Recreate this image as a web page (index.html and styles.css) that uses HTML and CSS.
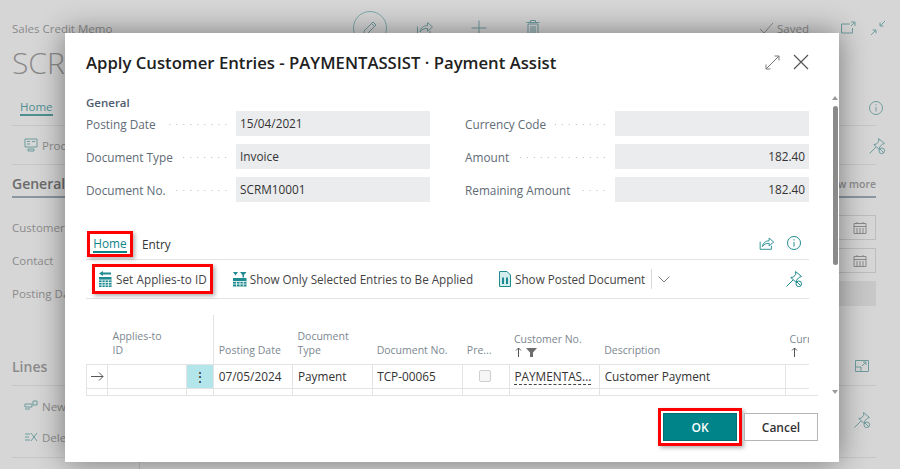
FILE: index.html
```html
<!DOCTYPE html>
<html lang="en">
<head>
    <meta charset="UTF-8">
    <title>Apply Customer Entries</title>
    <link rel="stylesheet" href="styles.css">
</head>
<body>
    <svg class="defs" width="0" height="0">
        <symbol id="pin" viewBox="0 0 20 20"><path d="M11.500 2.500 17.500 7.500l-2.300.8-2.700 2.900-.2 2.300L6.800 8.500l2.500-.4 2.500-2.800zM9 11 2.500 17.500" fill="none" stroke="currentColor"/><circle cx="14.800" cy="14.800" r="2.800" fill="none" stroke="currentColor"/><path d="m12.800 12.800 4 4" stroke="currentColor"/></symbol>
        <symbol id="info" viewBox="0 0 20 20"><circle cx="10" cy="10" r="6.500" fill="none" stroke="currentColor"/><path d="M10 9v4.500M10 6.200v1.300" stroke="currentColor"/></symbol>
        <symbol id="share" viewBox="0 0 20 20"><path d="M3.500 8.500v8.500h12.500v-4M6 14c.5-4 3.500-6.500 7.500-6.500V4.500l5 4.500-5 4.200V10.300C10 10.300 7.500 11.500 6 14z" fill="none" stroke="currentColor"/></symbol>
        <symbol id="up" viewBox="0 0 7 10"><path d="M3.500 10V1M1 3.500 3.500 1 6 3.500" fill="none" stroke="#555"/></symbol>
    </svg>

    <!-- pagina de fondo -->
    <div class="page">
        <div class="topbar">
            <span class="caption">Sales Credit Memo</span>
            <div class="top-icons">
                <span class="edit-circle">
                    <svg width="18" height="18" viewBox="0 0 18 18"><path d="M2.500 15.500l1-4 8.500-8.500 3 3-8.500 8.500zM10.500 4.500l3 3" fill="none" stroke="currentColor"/></svg>
                </span>
                <svg class="top-share" width="20" height="20"><use href="#share"/></svg>
                <svg class="top-plus" width="18" height="18" viewBox="0 0 18 18"><path d="M9 1.500v15M1.500 9h15" stroke="currentColor"/></svg>
                <svg class="top-trash" width="16" height="18" viewBox="0 0 16 18"><path d="M3 5h10v12H3zM1.500 3.500h13M5.500 3.500V1.500h5v2M6 7v8M8 7v8M10 7v8" fill="none" stroke="currentColor"/></svg>
            </div>
            <div class="top-right">
                <svg width="15" height="12" viewBox="0 0 15 12"><path d="M1 7l4 4 9-10" fill="none" stroke="#8d8d8d"/></svg>
                <span class="saved">Saved</span>
                <svg class="open-icon" width="16" height="14" viewBox="0 0 16 14"><path d="M10 3H1.500v9h11V7M11 1h4v4M15 1l-4 4" fill="none" stroke="currentColor"/></svg>
                <svg class="shrink-icon" width="16" height="16" viewBox="0 0 16 16"><path d="M15 1l-5 5M10 2.500V6h3.500M1 15l5-5M2.500 10H6v3.500" fill="none" stroke="currentColor"/></svg>
            </div>
        </div>
        <div class="doc-title">SCRM</div>
        <div class="bg-tabs">
            <span class="bg-home">Home</span>
            <svg class="bg-icon" width="20" height="20"><use href="#info"/></svg>
        </div>
        <div class="bg-actions">
            <span class="bg-action">
                <svg width="14" height="14" viewBox="0 0 14 14"><path d="M1 1h12v8H1zM3 3.500h3M3 6h3M8 3.500h3M4 11h6v2H4z" fill="none" stroke="currentColor"/></svg>
                Process
            </span>
            <svg class="bg-icon bg-pin" width="20" height="20"><use href="#pin"/></svg>
        </div>
        <div class="bg-section">
            <span class="bg-section-name">General</span>
            <span class="bg-more">Show more</span>
        </div>
        <div class="bg-field">
            <span>Customer Name</span>
            <span class="bg-date"><svg width="14" height="14" viewBox="0 0 14 14"><path d="M1 2.500h12v10H1zM1 5.500h12M4 1v2M10 1v2M4 7v5M7 7v5M10 7v5" fill="none" stroke="#8a8a8a"/></svg></span>
        </div>
        <div class="bg-field">
            <span>Contact</span>
            <span class="bg-date"><svg width="14" height="14" viewBox="0 0 14 14"><path d="M1 2.500h12v10H1zM1 5.500h12M4 1v2M10 1v2M4 7v5M7 7v5M10 7v5" fill="none" stroke="#8a8a8a"/></svg></span>
        </div>
        <div class="bg-field">
            <span>Posting Date</span>
            <span class="bg-date bg-blank"></span>
        </div>
        <div class="bg-lines-head">
            <span class="bg-lines-name">Lines</span>
            <svg class="bg-lines-icon" width="16" height="16" viewBox="0 0 16 16"><path d="M1.500 2.500h13v11h-13zM7 13.500V9H1.500M8 8l4-4M9 4h3v3" fill="none" stroke="currentColor"/></svg>
        </div>
        <div class="bg-lines-body">
            <div class="bg-lines-list">
                <span class="bg-action">
                    <svg width="14" height="14" viewBox="0 0 14 14"><path d="M1 5h7v3H1zM1 10h5M9 2h4v4H9z" fill="none" stroke="currentColor"/></svg>
                    New Line
                </span>
                <span class="bg-action">
                    <svg width="14" height="14" viewBox="0 0 14 14"><path d="M1 4h5M1 7h4M1 10h5M7 3l6 8M13 3l-6 8" fill="none" stroke="currentColor"/></svg>
                    Delete Line
                </span>
            </div>
            <svg class="lines-pin" width="20" height="20"><use href="#pin"/></svg>
        </div>
        <div class="bg-foot"></div>
    </div>

    <!-- dialogo -->
    <div class="dialog">
        <div class="dialog-head">
            <h1>Apply Customer Entries - PAYMENTASSIST · Payment Assist</h1>
            <svg class="grow-icon" width="15" height="15" viewBox="0 0 15 15"><path d="M14 1 1 14M9.500 1H14v4.500M1 9.500V14h4.500" fill="none" stroke="currentColor"/></svg>
            <svg class="close-icon" width="16" height="16" viewBox="0 0 16 16"><path d="M1 1l14 14M15 1 1 15" fill="none" stroke="currentColor" stroke-width="1.200"/></svg>
        </div>

        <div class="group-name">General</div>
        <div class="form">
            <div class="row"><span class="label">Posting Date</span><span class="dots"></span><span class="value">15/04/2021</span></div>
            <div class="row"><span class="label">Currency Code</span><span class="dots"></span><span class="value"></span></div>
            <div class="row"><span class="label">Document Type</span><span class="dots"></span><span class="value">Invoice</span></div>
            <div class="row"><span class="label">Amount</span><span class="dots"></span><span class="value num">182.40</span></div>
            <div class="row"><span class="label">Document No.</span><span class="dots"></span><span class="value">SCRM10001</span></div>
            <div class="row"><span class="label">Remaining Amount</span><span class="dots"></span><span class="value num">182.40</span></div>
        </div>

        <div class="tabs">
            <span class="tab-mark"><span class="tab-home">Home</span></span>
            <span class="tab">Entry</span>
            <svg class="tab-icon share-icon" width="18" height="18"><use href="#share"/></svg>
            <svg class="tab-icon" width="20" height="20"><use href="#info"/></svg>
        </div>

        <div class="actions">
            <span class="action action-mark">
                <svg width="14" height="18" viewBox="0 0 14 18"><path d="M5 1 1 3.500 5 6V4.500h8v-2H5z" fill="#1f8a8f"/><path d="M1 7h12.500v10H1z" fill="#1f8a8f"/><path d="M1 10h12.500M1 12.500h12.500M1 15h12.500M4 10v7M7.200 10v7M10.400 10v7" stroke="#fff" stroke-width=".8"/></svg>
                Set Applies-to ID
            </span>
            <span class="action action-tight">
                <svg width="15" height="16" viewBox="0 0 15 16"><path d="M1 1h5L3.500 4.500z" fill="#1f8a8f"/><path d="M8 1h6.500l-2.500 3v2.500h-1.500V4z" fill="#1f8a8f"/><path d="M1 7h13.500v8.500H1z" fill="#1f8a8f"/><path d="M1 10.500h13.500M1 13h13.500M4.500 10.500v5M8 10.500v5M11.300 10.500v5" stroke="#fff" stroke-width=".8"/></svg>
                Show Only Selected Entries to Be Applied
            </span>
            <span class="action">
                <svg width="12" height="16" viewBox="0 0 12 16"><path d="M.5.500h7.500l3.500 3.500v11.500H.5z" fill="#d3ecee" stroke="#1f8a8f"/><path d="M3 6.500h2V13H3zM7 6.500h2V13H7z" fill="#1f8a8f"/></svg>
                Show Posted Document
            </span>
            <span class="sep"></span>
            <svg class="chev" width="12" height="7" viewBox="0 0 12 7"><path d="M.5.500 6 6 11.500.500" fill="none" stroke="#7b7b7b"/></svg>
            <svg class="bar-pin" width="20" height="20"><use href="#pin"/></svg>
        </div>

        <div class="grid-wrap">
            <div class="grid-clip">
                <table class="grid">
                    <colgroup>
                        <col class="c-arrow"><col class="c-id"><col class="c-dots"><col class="c-wide"><col class="c-wide"><col class="c-no"><col class="c-pre"><col class="c-no"><col class="c-desc"><col class="c-curr">
                    </colgroup>
                    <thead>
                        <tr>
                            <th></th>
                            <th class="head-id" colspan="2">Applies-to<br>ID</th>
                            <th>Posting Date</th>
                            <th>Document<br>Type</th>
                            <th>Document No.</th>
                            <th>Pre...</th>
                            <th class="head-sort">Customer No.
                                <div class="sort-icons">
                                    <svg width="7" height="10"><use href="#up"/></svg>
                                    <svg width="11" height="9" viewBox="0 0 11 9"><path d="M0 0h11L7 4.500V9H4V4.500z" fill="#6d6d6d"/></svg>
                                </div>
                            </th>
                            <th>Description</th>
                            <th class="head-sort">Currency
                                <div class="sort-icons">
                                    <svg width="7" height="10"><use href="#up"/></svg>
                                </div>
                            </th>
                        </tr>
                    </thead>
                    <tbody>
                        <tr class="current">
                            <td class="arrow"><svg width="13" height="9" viewBox="0 0 13 9"><path d="M0 4.500h12M8 .5l4 4-4 4" fill="none" stroke="#555"/></svg></td>
                            <td></td>
                            <td class="more">⋮</td>
                            <td>07/05/2024</td>
                            <td>Payment</td>
                            <td>TCP-00065</td>
                            <td class="check"><span class="box"></span></td>
                            <td><span class="link">PAYMENTAS...</span></td>
                            <td>Customer Payment</td>
                            <td></td>
                        </tr>
                        <tr class="next">
                            <td></td><td></td><td></td><td></td><td></td><td></td><td></td><td></td><td></td><td></td>
                        </tr>
                    </tbody>
                </table>
            </div>
        </div>

        <div class="foot">
            <span class="ok-mark"><button class="btn btn-ok">OK</button></span>
            <button class="btn btn-cancel">Cancel</button>
        </div>

        <!-- barra de scroll -->
        <div class="scroll">
            <span class="scroll-up"></span>
            <span class="scroll-thumb"></span>
            <span class="scroll-down"></span>
        </div>
    </div>
</body>
</html>
```

FILE: styles.css
```css
/* Estilos generales */
* {
    box-sizing: border-box;
}

body {
    margin: 0;
    width: 900px;
    height: 469px;
    overflow: hidden;
    position: relative;
    background-color: #d6d6d6;
    font-family: "Open Sans", Arial, sans-serif;
    font-size: 11.8px;
    color: #333;
}

.defs {
    position: absolute;
}

/* Pagina de fondo */
.page {
    height: 469px;
    padding: 0 24px 0 12px;
    color: #8b8b8b;
}

.topbar {
    height: 56px;
    margin-right: -24px;
    display: flex;
    align-items: center;
    color: #6f9c9e;
}

.caption {
    width: 341px;
    color: #8b8b8b;
    font-size: 11.5px;
}

.top-icons {
    display: flex;
    align-items: center;
}

.edit-circle {
    width: 34px;
    height: 34px;
    border: 1px solid #7fa9ab;
    border-radius: 50%;
    display: flex;
    align-items: center;
    justify-content: center;
    margin-right: 27px;
}

.top-share {
    margin-right: 36px;
}

.top-plus {
    margin-right: 37px;
}

.top-right {
    margin-left: auto;
    display: flex;
    align-items: center;
    color: #6f9c9e;
    padding-right: 14px;
}

.saved {
    margin: 0 31px 0 3px;
    color: #8b8b8b;
    font-size: 11.5px;
}

.open-icon {
    margin-right: 14px;
}

.doc-title {
    height: 44px;
    font-size: 30px;
    font-weight: 300;
    line-height: 14px;
}

.bg-tabs,
.bg-actions {
    display: flex;
    justify-content: space-between;
    align-items: center;
    border-bottom: 1px solid #c6c6c6;
    color: #6f9c9e;
}

.bg-tabs {
    height: 26px;
    padding: 0 0 10px 8px;
}

.bg-home {
    color: #4f8f92;
    border-bottom: 2px solid #4f8f92;
    font-size: 11.5px;
}

.bg-actions {
    height: 39px;
    padding-left: 12px;
}

.bg-icon {
    margin-right: -10px;
}

.bg-pin {
    margin: 2px -11px 0 0;
}

.bg-action {
    display: flex;
    align-items: center;
    gap: 4px;
    color: #8b8b8b;
    font-size: 11.5px;
}

.bg-action svg {
    color: #6f9c9e;
}

.bg-section {
    height: 33px;
    display: flex;
    justify-content: space-between;
    align-items: center;
    border-bottom: 2px solid #8a97a0;
    padding-top: 6px;
}

.bg-section-name {
    font-size: 14px;
    font-weight: 600;
    color: #6b6b6b;
}

.bg-more {
    font-size: 10.5px;
    font-weight: 600;
}

.bg-field {
    height: 33px;
    display: flex;
    justify-content: space-between;
    align-items: center;
    font-size: 11.5px;
    transform: translateY(13px);
}

.bg-date {
    width: 300px;
    height: 25px;
    border: 1px solid #bdbdbd;
    display: flex;
    justify-content: flex-end;
    align-items: center;
    padding-right: 8px;
}

.bg-blank {
    background-color: #c8c8c8;
    border: none;
}

.bg-lines-head {
    height: 36px;
    margin-top: 53px;
    display: flex;
    justify-content: space-between;
    align-items: center;
    border-bottom: 1px solid #c6c6c6;
    padding-bottom: 3px;
}

.bg-lines-name {
    font-size: 14px;
    font-weight: 600;
}

.bg-lines-icon {
    color: #6f9c9e;
    margin-right: 6px;
}

.bg-lines-body {
    height: 72px;
    display: flex;
    justify-content: space-between;
    align-items: center;
    border-bottom: 1px solid #c6c6c6;
    padding-left: 12px;
}

.lines-pin {
    color: #6f9c9e;
    margin: 0 4px 3px 0;
}

.bg-lines-list {
    display: flex;
    flex-direction: column;
    gap: 16px;
}

.bg-foot {
    height: 14px;
    width: 128px;
    border-right: 1px solid #c0c0c0;
}

/* Dialogo */
.dialog {
    position: absolute;
    left: 65px;
    top: 33px;
    width: 774px;
    height: 429px;
    padding: 0 30px 0 21px;
    background-color: white;
    box-shadow: 0 0 28px rgba(0, 0, 0, 0.45);
}

.dialog-head {
    height: 58px;
    display: flex;
    align-items: center;
}

h1 {
    margin: 0;
    flex: 1;
    font-size: 16.7px;
    font-weight: 600;
    color: #212121;
}

.grow-icon {
    color: #7b7b7b;
    margin-right: 13px;
}

.close-icon {
    color: #555;
}

.group-name {
    height: 15px;
    margin-top: 5px;
    line-height: 14px;
    font-size: 11.5px;
    font-weight: 600;
    color: #505c6d;
}

.form {
    display: grid;
    grid-template-columns: 344px 344px;
    column-gap: 35px;
    row-gap: 8px;
}

.row {
    height: 25px;
    display: flex;
    align-items: center;
}

.label {
    color: #616b75;
    white-space: nowrap;
}

/* puntitos entre etiqueta y valor */
.dots {
    flex: 1;
    height: 3px;
    margin: 1px 7px 0 8px;
    background-image: radial-gradient(circle, #b8b8b8 0.7px, transparent 1px);
    background-size: 7px 3px;
    background-position: right center;
}

.value {
    width: 194px;
    height: 25px;
    line-height: 25px;
    padding: 0 4px;
    background-color: #ebecee;
    color: #333;
    flex-shrink: 0;
}

.num {
    text-align: right;
}

/* Pestañas */
.tabs {
    height: 29px;
    margin-top: 29px;
    display: flex;
    align-items: center;
    border-bottom: 1px solid #e3e3e3;
}

.tab-mark {
    width: 46px;
    height: 26px;
    margin: 0 9px 0 1px;
    align-self: flex-start;
    border: 3px solid red;
    box-shadow: 2px 2px 4px rgba(0, 0, 0, 0.3);
    display: flex;
    justify-content: center;
    line-height: 18px;
}

.tab-home {
    height: 19px;
    color: #0d8488;
    border-bottom: 2px solid #0d8488;
}

.tab {
    color: #333;
    margin-bottom: 3px;
}

.tab-icon {
    color: #1f8a8f;
    margin-bottom: 5px;
}

.share-icon {
    margin: 0 9px 5px auto;
}

.tabs .tab-icon:last-child {
    margin-right: 5px;
}

.actions {
    height: 39px;
    display: flex;
    align-items: center;
    border-bottom: 1px solid #e3e3e3;
    font-size: 11.7px;
}

.action {
    display: flex;
    align-items: center;
    gap: 4px;
    color: #444;
    white-space: nowrap;
    margin-right: 25px;
}

.action-tight {
    gap: 3px;
    margin-right: 26px;
}

.action-mark {
    height: 30px;
    margin: 0 19px 0 6px;
    padding: 0 3px;
    border: 3px solid red;
    box-shadow: 2px 2px 4px rgba(0, 0, 0, 0.3);
    letter-spacing: 0.07px;
}

.sep {
    width: 1px;
    height: 20px;
    margin-left: -19px;
    background-color: #d8d8d8;
}

.chev {
    margin-left: 6px;
}

.bar-pin {
    margin: 0 5px 0 auto;
    color: #1f8a8f;
}

/* Tabla */
.grid-wrap {
    width: 732px;
    height: 81px;
    margin-top: 16px;
    border-bottom: 1px solid #e3e3e3;
}

.grid-clip {
    width: 723px;
    height: 80px;
    overflow: hidden;
}

.grid {
    width: 860px;
    table-layout: fixed;
    border-collapse: collapse;
}

.c-arrow { width: 21px; }
.c-id { width: 79px; }
.c-dots { width: 27px; }
.c-wide { width: 79px; }
.c-no { width: 90px; }
.c-pre { width: 47px; }
.c-desc { width: 185px; }
.c-curr { width: 160px; }

.grid th {
    height: 49px;
    padding: 0 4px 7px 4.5px;
    text-align: left;
    vertical-align: bottom;
    font-size: 10.5px;
    font-weight: 400;
    line-height: 14px;
    color: #7c8791;
    white-space: nowrap;
}

.grid .head-id {
    padding-left: 5px;
    border-right: 1px solid #e3e3e3;
}

.grid .head-sort {
    padding-bottom: 5px;
}

.sort-icons {
    height: 13px;
    padding-left: 1px;
    display: flex;
    align-items: center;
    gap: 4px;
}

.grid td {
    height: 24px;
    padding: 0 4.5px;
    border: 1px solid #e3e3e3;
    white-space: nowrap;
    overflow: hidden;
    color: #333;
}

.grid .arrow {
    padding: 0 4px;
}

.grid .more {
    padding: 0;
    text-align: center;
    background-color: #b2e6ea;
    font-size: 14px;
}

.grid .check {
    text-align: center;
}

.box {
    display: inline-block;
    width: 12px;
    height: 12px;
    margin: 0 2px 3px 0;
    vertical-align: middle;
    border: 1px solid #cfcfcf;
    border-radius: 2px;
    background-color: #f6f6f6;
}

.link {
    border-bottom: 1px dashed #444;
}

.next td {
    height: 16px;
}

/* Botones */
.foot {
    display: flex;
    justify-content: flex-end;
    align-items: center;
    height: 62px;
    margin: 0 -9px 0 0;
    gap: 2px;
}

.ok-mark {
    padding: 2px;
    border: 3px solid red;
    box-shadow: 2px 2px 4px rgba(0, 0, 0, 0.3);
    display: flex;
}

.btn {
    width: 74px;
    height: 28px;
    font-family: inherit;
    font-size: 12px;
    font-weight: 600;
}

.btn-ok {
    border: 1px solid #006f73;
    background-color: #008489;
    color: white;
}

.btn-cancel {
    border: 1px solid #b5b5b5;
    background-color: white;
    color: #333;
}

/* Scroll */
.scroll {
    position: absolute;
    right: 1px;
    top: 63px;
    width: 6px;
    height: 298px;
    display: flex;
    flex-direction: column;
    align-items: center;
}

.scroll-up {
    border: 3px solid transparent;
    border-top: none;
    border-bottom: 4px solid #9a9a9a;
}

.scroll-thumb {
    width: 5px;
    height: 159px;
    margin-top: 6px;
    border-radius: 3px;
    background-color: #8a8a8a;
}

.scroll-down {
    margin-top: auto;
    border: 3px solid transparent;
    border-bottom: none;
    border-top: 4px solid #9a9a9a;
}
```
